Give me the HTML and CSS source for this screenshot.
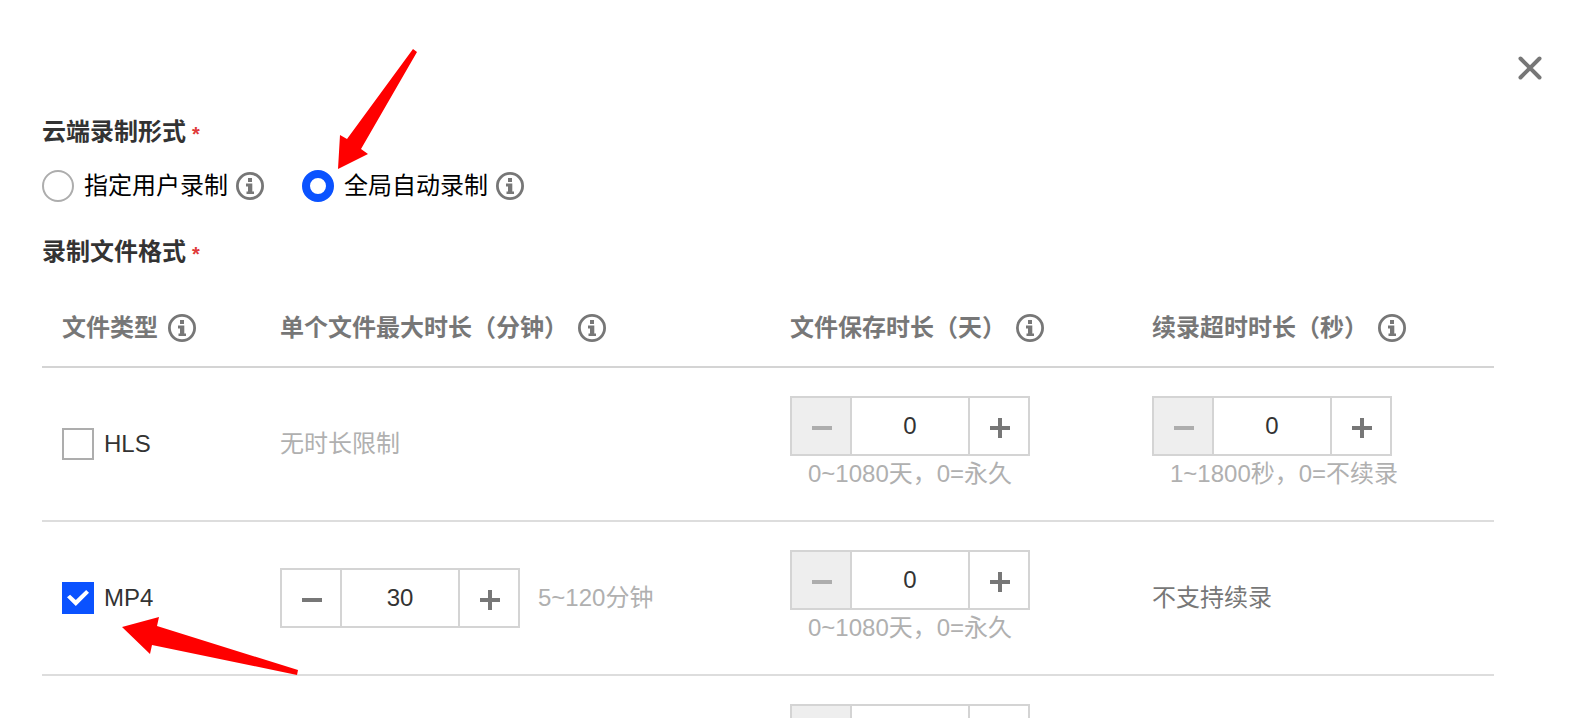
FILE: index.html
```html
<!DOCTYPE html>
<html lang="zh-CN">
<head>
  <meta charset="UTF-8" />
  <meta name="viewport" content="width=device-width, initial-scale=1.0"/>
  <title>云端录制形式</title>
  <link rel="stylesheet" href="styles.css">
</head>
<body>
  <svg class="sprite" aria-hidden="true">
    <symbol id="icon-info" viewBox="0 0 28 28">
      <circle cx="14" cy="14" r="12.600" fill="none" stroke="currentColor" stroke-width="2.800"/>
      <path d="M12 6h4v4h-4zM10 11.500h6.300V19.500H18v2.500h-7.500v-2.500H12v-5h-2z" fill="currentColor"/>
    </symbol>
    <symbol id="icon-minus" viewBox="0 0 20 20">
      <path d="M0 8h20v4H0z" fill="currentColor"/>
    </symbol>
    <symbol id="icon-plus" viewBox="0 0 20 20">
      <path d="M0 8h8V0h4v8h8v4h-8v8H8v-8H0z" fill="currentColor"/>
    </symbol>
  </svg>

  <div class="panel">
    <div class="panel-top">
      <button class="close" type="button" aria-label="关闭">
        <svg viewBox="0 0 24 24" width="24" height="24"><path d="M2.500 2.500l19 19M21.500 2.500l-19 19" fill="none" stroke="currentColor" stroke-width="4" stroke-linecap="round"/></svg>
      </button>
    </div>

    <form class="content">
      <h3 class="title">云端录制形式<span class="required">*</span></h3>
      <div class="radios">
        <div class="option">
          <label><input type="radio" name="mode">指定用户录制</label>
          <svg class="info"><use href="#icon-info"/></svg>
        </div>
        <div class="option">
          <label><input type="radio" name="mode" checked>全局自动录制</label>
          <svg class="info"><use href="#icon-info"/></svg>
          <svg class="arrow arrow-radio" viewBox="0 0 80 122"><path d="M75 1L79 4L23 101L30 106L0 121L2 87L9 91z"/></svg>
        </div>
      </div>

      <h3 class="title">录制文件格式<span class="required">*</span></h3>
      <table>
        <colgroup>
          <col class="col-type">
          <col>
          <col class="col-time">
          <col class="col-time">
        </colgroup>
        <thead>
          <tr>
            <th><div class="head">文件类型<svg class="info"><use href="#icon-info"/></svg></div></th>
            <th><div class="head">单个文件最大时长（分钟）<svg class="info"><use href="#icon-info"/></svg></div></th>
            <th><div class="head">文件保存时长（天）<svg class="info"><use href="#icon-info"/></svg></div></th>
            <th><div class="head">续录超时时长（秒）<svg class="info"><use href="#icon-info"/></svg></div></th>
          </tr>
        </thead>
        <tbody>
          <tr>
            <td><label><input type="checkbox">HLS</label></td>
            <td class="muted">无时长限制</td>
            <td>
              <div class="stepper">
                <button type="button" aria-label="减少" disabled><svg><use href="#icon-minus"/></svg></button>
                <input type="text" value="0" aria-label="文件保存时长（天）">
                <button type="button" aria-label="增加"><svg><use href="#icon-plus"/></svg></button>
              </div>
              <div class="hint">0~1080天，0=永久</div>
            </td>
            <td>
              <div class="stepper">
                <button type="button" aria-label="减少" disabled><svg><use href="#icon-minus"/></svg></button>
                <input type="text" value="0" aria-label="续录超时时长（秒）">
                <button type="button" aria-label="增加"><svg><use href="#icon-plus"/></svg></button>
              </div>
              <div class="hint">1~1800秒，0=不续录</div>
            </td>
          </tr>
          <tr>
            <td>
              <div class="option">
                <label><input type="checkbox" checked>MP4</label>
                <svg class="arrow arrow-check" viewBox="0 0 177 58"><path d="M0 10L37 0L35 9L176 53L175 58L30 28L28 37z"/></svg>
              </div>
            </td>
            <td>
              <div class="inline">
                <div class="stepper">
                  <button type="button" aria-label="减少"><svg><use href="#icon-minus"/></svg></button>
                  <input type="text" value="30" aria-label="单个文件最大时长（分钟）">
                  <button type="button" aria-label="增加"><svg><use href="#icon-plus"/></svg></button>
                </div>
                <div class="hint">5~120分钟</div>
              </div>
            </td>
            <td>
              <div class="stepper">
                <button type="button" aria-label="减少" disabled><svg><use href="#icon-minus"/></svg></button>
                <input type="text" value="0" aria-label="文件保存时长（天）">
                <button type="button" aria-label="增加"><svg><use href="#icon-plus"/></svg></button>
              </div>
              <div class="hint">0~1080天，0=永久</div>
            </td>
            <td class="note">不支持续录</td>
          </tr>
          <tr>
            <td></td>
            <td></td>
            <td>
              <div class="stepper">
                <button type="button" aria-label="减少" disabled></button>
                <input type="text" aria-label="文件保存时长（天）">
                <button type="button" aria-label="增加"></button>
              </div>
            </td>
            <td></td>
          </tr>
        </tbody>
      </table>
    </form>
  </div>
</body>
</html>
```
FILE: styles.css
```css
:root {
  --blue: #0a52ff;
  --text: #333333;
  --gray: #777777;
  --light: #b0b0b0;
  --border: #d4d4d4;
}

* {
  box-sizing: border-box;
  margin: 0;
  padding: 0;
}

body {
  background: #ffffff;
  color: var(--text);
  font-family: "Liberation Sans", "Noto Sans CJK SC", sans-serif;
  font-size: 24px;
  line-height: 36px;
}

button,
input {
  font: inherit;
  color: inherit;
}

.sprite {
  display: none;
}

.panel {
  height: 100vh;
  overflow: hidden;
}

.panel-top {
  display: flex;
  justify-content: flex-end;
  padding: 46px 22px 24px;
}

.close {
  display: flex;
  align-items: center;
  justify-content: center;
  width: 44px;
  height: 44px;
  border: none;
  background: none;
  color: var(--gray);
  cursor: pointer;
}

.content {
  padding: 0 80px 0 42px;
}

.title {
  display: flex;
  align-items: center;
  gap: 6px;
  margin-bottom: 20px;
  font-size: 24px;
  font-weight: bold;
}

.required {
  color: #e03a3a;
  font-size: 20px;
  line-height: 24px;
  padding-top: 4px;
}

.radios {
  display: flex;
  gap: 38px;
  margin-bottom: 32px;
  color: #000000;
}

.option {
  position: relative;
  display: flex;
  align-items: center;
  gap: 8px;
}

label {
  display: flex;
  align-items: center;
  gap: 10px;
  height: 32px;
  cursor: pointer;
}

.info {
  flex: none;
  width: 28px;
  height: 28px;
  color: var(--gray);
}

input[type="radio"],
input[type="checkbox"] {
  appearance: none;
  display: grid;
  place-items: center;
  width: 32px;
  height: 32px;
  border: 2px solid #adadad;
  background: #ffffff;
}

input[type="radio"] {
  border-radius: 50%;
}

input[type="radio"]:checked {
  border: 8px solid var(--blue);
}

input[type="checkbox"]:checked {
  border-color: var(--blue);
  background: var(--blue);
}

/* white tick */
input[type="checkbox"]:checked::before {
  content: "";
  width: 22px;
  height: 16px;
  background: #ffffff;
  clip-path: polygon(0 46%, 14% 29%, 40% 62%, 87% 0, 100% 17%, 40% 100%);
}

table {
  width: 100%;
  table-layout: fixed;
  border-collapse: separate;
  border-spacing: 0;
}

.col-type {
  width: 218px;
}

.col-time {
  width: 362px;
}

th,
td {
  padding: 28px 20px;
  border-bottom: 2px solid #dddddd;
  text-align: left;
  vertical-align: middle;
}

th {
  padding: 20px;
  border-color: var(--border);
  color: var(--gray);
}

.head {
  display: flex;
  align-items: center;
  gap: 10px;
  white-space: nowrap;
}

.muted,
.hint {
  color: var(--light);
}

.note {
  color: var(--gray);
}

.hint {
  margin-left: 18px;
  white-space: nowrap;
}

.inline {
  display: flex;
  align-items: center;
}

.stepper {
  display: flex;
  width: 240px;
  height: 60px;
  border: 2px solid var(--border);
}

.stepper button {
  display: flex;
  align-items: center;
  justify-content: center;
  width: 58px;
  padding: 4px 0 0 2px;
  border: none;
  background: #ffffff;
  color: var(--gray);
  cursor: pointer;
}

.stepper button:disabled {
  background: #eeeeee;
  color: #adadad;
  cursor: default;
}

.stepper svg {
  width: 20px;
  height: 20px;
}

.stepper input {
  flex: 1;
  min-width: 0;
  border: solid var(--border);
  border-width: 0 2px;
  text-align: center;
  outline: none;
}

/* red pointer arrows drawn over the form */
.arrow {
  position: absolute;
  fill: #ff0000;
  pointer-events: none;
}

.arrow-radio {
  left: 36px;
  bottom: 32px;
  width: 80px;
  height: 122px;
}

.arrow-check {
  left: 60px;
  top: 35px;
  width: 177px;
  height: 58px;
  z-index: 1;
}
```
